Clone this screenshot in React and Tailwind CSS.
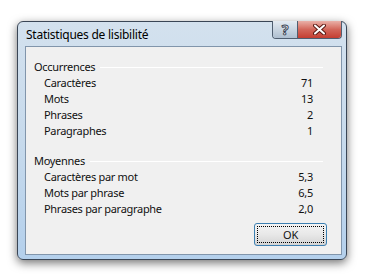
import React from "react";

const occurrences = [
  ["Caractères", "71"],
  ["Mots", "13"],
  ["Phrases", "2"],
  ["Paragraphes", "1"],
];

const moyennes = [
  ["Caractères par mot", "5,3"],
  ["Mots par phrase", "6,5"],
  ["Phrases par paragraphe", "2,0"],
];

const Group = ({ title, rows, gapClass }) => (
  <div className={gapClass}>
    <div className="flex items-center h-[16px] pr-[4px]">
      <span>{title}</span>
      <div className="flex-1 ml-[5px] h-px bg-[#dcdcdc] border-b border-white" />
    </div>
    {rows.map(([label, value]) => (
      <div key={label} className="flex items-center justify-between h-[16px] pl-[10px] pr-[14px]">
        <span>{label}</span>
        <span>{value}</span>
      </div>
    ))}
  </div>
);

const App = () => {
  return (
    <div
      className="w-[367px] h-[277px] bg-white pl-[17px] pt-[21px] text-[11px] tracking-[-0.3px] text-[#111]"
      style={{ fontFamily: '"Noto Sans", "Open Sans", sans-serif' }}
    >
      <div className="w-[330px] h-[239px] flex flex-col rounded-[6px] border border-[#3a4656] bg-gradient-to-b from-[#d3e1ee] via-[#c7daec] to-[#b4d0ec] shadow-[0_3px_10px_rgba(0,0,0,0.55)]">
        {/* title bar */}
        <div className="h-[24px] flex items-start">
          <span className="pl-[8px] pt-[5px] leading-[16px] text-[12px] tracking-[-0.25px] text-black">Statistiques de lisibilité</span>
          <div className="ml-auto mr-[4px] -mt-px flex h-[18px] border border-t-0 border-[#4f5e70] rounded-b-[4px] overflow-hidden">
            <div className="w-[25px] flex items-center justify-center border-r border-[#4f5e70] bg-gradient-to-b from-[#e4ebf2] via-[#c9d5e1] to-[#aebfd0] text-[14px] font-bold leading-none text-white [-webkit-text-stroke:1px_#3a4656]">
              ?
            </div>
            <div className="w-[43px] flex items-center justify-center bg-gradient-to-b from-[#e9b0a8] via-[#d2665a] to-[#c43d31]">
              <svg width="13" height="11" viewBox="0 0 13 11">
                <path d="M2 1.5 L11 9.5 M11 1.5 L2 9.5" stroke="#5a1a14" strokeWidth="4" strokeLinecap="round" />
                <path d="M2 1.5 L11 9.5 M11 1.5 L2 9.5" stroke="#ffffff" strokeWidth="2" strokeLinecap="round" />
              </svg>
            </div>
          </div>
        </div>

        {/* client area */}
        <div className="flex-1 ml-[7px] mr-[4px] mb-[4px] border border-[#8195ab] bg-[#f0f0f0] flex flex-col pl-[8px] pr-[14px] pt-[12px]">
          <Group title="Occurrences" rows={occurrences} />
          <Group title="Moyennes" rows={moyennes} gapClass="mt-[14px]" />
          <div className="mt-[6px] flex justify-end">
            <button className="w-[73px] h-[23px] rounded-[3px] border border-[#3c7fb1] bg-gradient-to-b from-[#f4f4f4] via-[#e8e8e8] to-[#d4d4d4] p-[2px]">
              <div className="w-full h-full border border-dotted border-black flex items-center justify-center leading-none text-[11px]">
                OK
              </div>
            </button>
          </div>
        </div>
      </div>
    </div>
  );
};

export default App;
